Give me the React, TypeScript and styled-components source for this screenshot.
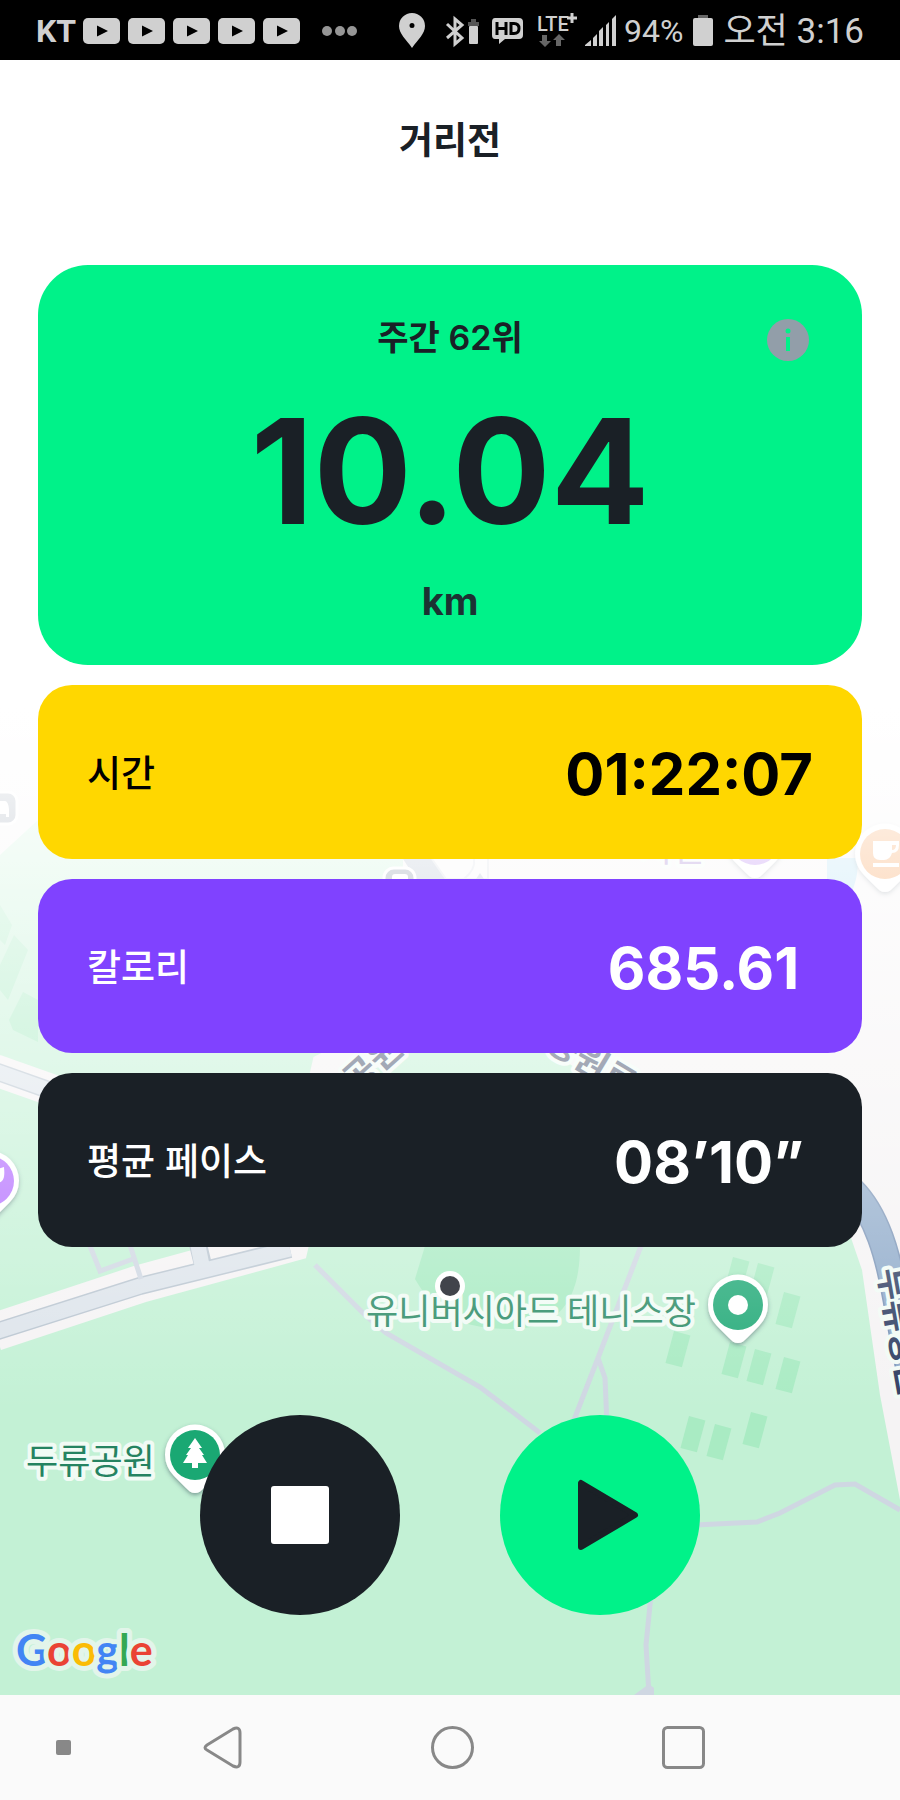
import React from "react";
import styled, { createGlobalStyle } from "styled-components";

const ink = "#1a2026";
const lime = "#00f289";

const GlobalStyle = createGlobalStyle`
  *, *::before, *::after { box-sizing: border-box; }
  body {
    margin: 0;
    background: #fff;
    color: ${ink};
    font-family: Inter, "Noto Sans CJK KR", sans-serif;
  }
`;

const Screen = styled.div`
  min-height: 100vh;
  display: flex;
  flex-direction: column;
`;

const StatusBar = styled.header`
  height: 60px;
  padding: 2px 36px 0;
  display: flex;
  align-items: center;
  justify-content: space-between;
  background: #000;
  color: #d0d0d0;
  font-family: Roboto, "Noto Sans CJK KR", sans-serif;
  font-size: 32px;
  line-height: 60px;
  white-space: nowrap;
`;

const StatusGroup = styled.div<{ $gap: number }>`
  display: flex;
  align-items: center;
  gap: ${(p) => p.$gap}px;
`;

const Carrier = styled.span`
  font-weight: 700;
`;

const Clock = styled.time`
  padding-top: 2px;
  font-size: 35px;
`;

const Glyph = styled.svg`
  display: block;
  flex: none;
  overflow: visible;
`;

const RunPanel = styled.main`
  flex: 1;
  position: relative;
  isolation: isolate;
  display: flex;
  flex-direction: column;
  padding: 0 38px 80px;
`;

const MapCanvas = styled.svg`
  position: absolute;
  inset: 0;
  z-index: -1;
  width: 100%;
  height: 100%;
  font-family: "Noto Sans CJK KR", sans-serif;
`;

const Title = styled.h1`
  margin: 0;
  padding: 51px 0 94px;
  font-size: 37px;
  line-height: 60px;
  font-weight: 700;
  text-align: center;
`;

const Cards = styled.div`
  display: flex;
  flex-direction: column;
  gap: 20px;
`;

const DistanceCard = styled.section`
  position: relative;
  height: 400px;
  padding: 49px 52px 0;
  border-radius: 50px;
  background: ${lime};
  text-align: center;
`;

const Rank = styled.p`
  margin: 0;
  font-size: 34px;
  line-height: 48px;
  font-weight: 600;
`;

const Distance = styled.p`
  margin: 19px 0 20px;
  font-size: 146px;
  line-height: 180px;
  font-weight: 700;
`;

const Unit = styled.p`
  margin: 0;
  font-size: 38px;
  line-height: 40px;
  font-weight: 700;
  color: #1c3233;
`;

const InfoButton = styled.button`
  position: absolute;
  top: 54px;
  right: 53px;
  padding: 0;
  border: 0;
  background: none;
`;

const StatCard = styled.section<{ $bg: string; $fg: string }>`
  height: 174px;
  padding: 4px 49px 0;
  border-radius: 34px;
  display: flex;
  align-items: center;
  justify-content: space-between;
  background: ${(p) => p.$bg};
  color: ${(p) => p.$fg};
`;

const StatLabel = styled.span`
  font-size: 37px;
  line-height: 56px;
  font-weight: 500;
`;

const StatValue = styled.strong`
  font-size: 58px;
  line-height: 72px;
  font-weight: 700;
  white-space: pre;
`;

const Controls = styled.div`
  display: flex;
  justify-content: center;
  gap: 100px;
  margin-top: 168px;
`;

const RoundButton = styled.button<{ $bg: string }>`
  width: 200px;
  height: 200px;
  padding: 0;
  border: 0;
  border-radius: 50%;
  display: grid;
  place-items: center;
  background: ${(p) => p.$bg};
`;

const NavBar = styled.nav`
  height: 105px;
  padding: 0 195px 0 56px;
  display: flex;
  align-items: center;
  gap: 132px;
  background: #fafafa;
`;

const NavKeys = styled.div`
  flex: 1;
  display: flex;
  align-items: center;
  justify-content: space-between;
`;

const NavButton = styled.button`
  padding: 0;
  border: 0;
  background: none;
`;

const YoutubeIcon = () => (
  <Glyph width="39" height="28" viewBox="0 0 39 28">
    <rect x="1" y="1" width="37" height="26" rx="5" fill="#d0d0d0" />
    <path d="M15 8.500v11l11-5.500z" fill="#000" />
  </Glyph>
);

const courts = [
  [730, 1260], [755, 1266], [781, 1295], [671, 1334], [727, 1345],
  [752, 1352], [781, 1360], [686, 1419], [712, 1427], [748, 1415],
];

const Pin = ({ x, y, fill, children }: { x: number; y: number; fill: string; children?: React.ReactNode }) => (
  <g transform={`translate(${x} ${y})`}>
    <path d="M0 38c-4 0-6-2-9-5l-12-12a30 30 0 1 1 42 0L9 33c-3 3-5 5-9 5z" fill="#fff" filter="url(#pinShadow)" />
    <circle r="25" fill={fill} />
    {children}
  </g>
);

const label = {
  stroke: "#f1fbf5",
  strokeWidth: 8,
  strokeLinejoin: "round" as const,
  paintOrder: "stroke",
};

const CourseMap = () => (
  <MapCanvas viewBox="0 60 900 1635" preserveAspectRatio="xMidYMid slice" role="img" aria-label="지도">
    <defs>
      <linearGradient id="fade" gradientUnits="userSpaceOnUse" x1="0" y1="60" x2="0" y2="1410">
        <stop offset="0" stopColor="#fff" />
        <stop offset="0.48" stopColor="#fff" />
        <stop offset="1" stopColor="#fff" stopOpacity="0" />
      </linearGradient>
      <filter id="pinShadow" x="-30%" y="-30%" width="160%" height="170%">
        <feDropShadow dx="0" dy="2" stdDeviation="2" floodColor="#345" floodOpacity="0.5" />
      </filter>
    </defs>
    <rect y="60" width="900" height="1635" fill="#f5f3f4" />
    <path d="M0 855 38 820V795H400L430 890 545 1035 640 1073 850 1235 862 1270 880 1395 900 1500V1695H0z" fill="#c3f1d5" />
    <path d="M0 905 12 925 5 945 0 940zM0 965l14-30 14 15-20 50-8-10zM9 1020l14-28 15 8v42l-25-12z" fill="#a9ebc3" />
    <path d="M425 1246h155c0 50-18 83-70 83-50 0-75-15-95-50z" fill="#a9ebc3" />
    <g fill="#a9ebc3">
      {courts.map(([x, y]) => (
        <rect key={`${x}-${y}`} width="17" height="33" transform={`translate(${x + 3} ${y - 3}) rotate(15)`} />
      ))}
    </g>
    <path d="M827 858h30c2 12-1 24-6 36l-24-14z" fill="#a8dcf2" />
    <path d="M403 859h84v20h-84z" fill="#f8f7f8" />
    <path d="M403 859h29l14 20h-30z" fill="#a9b6c8" />
    <path d="M432 859l14 20h42v-20M474 859q2 10-10 20" fill="none" stroke="#d5dae2" strokeWidth="2" />
    <path d="M480 873l4 6h-8z" fill="#a9b6c8" />
    <g fill="none" stroke="#f5f3f4">
      <path d="M-5 1070 60 1093" strokeWidth="32" />
      <path d="M-5 1332 140 1284 290 1243 330 1070 410 1030" strokeWidth="38" />
      <path d="M545 1020 640 1083" strokeWidth="46" />
    </g>
    <g fill="none" stroke="#b9c5d0" strokeWidth="18">
      <path d="M-5 1071 60 1094" />
      <path d="M-5 1332 140 1286 290 1249M203 1265 196 1236" />
    </g>
    <g fill="none" stroke="#dde4eb" strokeWidth="15">
      <path d="M-5 1071 60 1094" />
      <path d="M-5 1332 140 1286 290 1249M203 1270 196 1236" />
    </g>
    <g fill="none" stroke="#cfd7e2" strokeWidth="5">
      <path d="M90 1246 100 1271 133 1259M129 1242 141 1279" />
      <path d="M315 1265 366 1316 386 1333 480 1387 540 1433" />
      <path d="M641 1246 598 1358 572 1425M598 1358 605 1378 607 1425" />
      <path d="M695 1525 757 1522 780 1513 835 1485 855 1484 900 1510" />
      <path d="M651 1595 646 1645 649 1695" />
    </g>
    <path d="M634 1695 649 1684l5 4v7z" fill="#cfd7e2" />
    <path d="M852 1190c25 25 36 65 44 110s12 70 24 120" fill="none" stroke="#7892b5" strokeWidth="27" />
    <path d="M852 1190c25 25 36 65 44 110s12 70 24 120" fill="none" stroke="#8da9c9" strokeWidth="24" />
    <g fontSize="35" fontWeight="700" {...label}>
      <text transform="translate(357 1094) rotate(-42)" fill="#4a5670">공원</text>
      <text transform="translate(544 1048) rotate(31)" fill="#4a5670">공원로</text>
      <text transform="translate(878 1270) rotate(80)" fill="#2f3f63">두류공원</text>
      <text x="640" y="862" fontWeight="400" fill="#8b5fc4">시민</text>
    </g>
    <g>
      <rect x="-19" y="792" width="36" height="32" rx="9" fill="#6e7f93" stroke="#fff" strokeWidth="3" />
      <path d="M-8 801H5q3 0 4 8v8H6v-3H-8z" fill="#fff" />
      <rect x="384" y="868" width="31" height="34" rx="10" fill="#6e7f93" stroke="#fff" strokeWidth="3" />
      <rect x="392" y="874" width="16" height="14" rx="3" fill="#fff" />
      <Pin x={755} y={840} fill="#a766ee" />
      <Pin x={885} y={854} fill="#f58a32">
        <path d="M-12-13H14v4q0 8-7 8-2 7-8 7H-5q-7 0-7-7zM7-9v5q4 0 4-5zM-12 9H14v4H-12z" fill="#fff" fillRule="evenodd" />
      </Pin>
      <Pin x={-11} y={1181} fill="#b26bff">
        <path d="M8-12 15-14c1 10 0 16-8 16z" fill="#fff" />
      </Pin>
    </g>
    <text x="366" y="1324" fontSize="35" fill="#2f8d68" {...label}>유니버시아드 테니스장</text>
    <Pin x={738} y={1305} fill="#23aa78">
      <circle r="10" fill="#fff" />
    </Pin>
    <rect y="60" width="900" height="1635" fill="url(#fade)" />
    <circle cx="450" cy="1286" r="15" fill="#fff" />
    <circle cx="450" cy="1286" r="10" fill="#41444b" />
    <text x="26" y="1474" fontSize="35" fill="#258361" {...label}>두류공원</text>
    <Pin x={195} y={1455} fill="#1aa873">
      <path d="M0-17 7-7H4L9 0H7L12 8H3v5h-6V8h-9L-7 0h-2L-4-7h-3z" fill="#fff" />
    </Pin>
    <text x="16" y="1666" fontFamily="Lato, sans-serif" fontSize="43" fontWeight="700" {...label} stroke="#e2f5ea" strokeWidth="10">
      <tspan fill="#4285f4">G</tspan>
      <tspan fill="#ea4335">o</tspan>
      <tspan fill="#fbbc05">o</tspan>
      <tspan fill="#4285f4">g</tspan>
      <tspan fill="#34a853">l</tspan>
      <tspan fill="#ea4335">e</tspan>
    </text>
  </MapCanvas>
);

const stats = [
  { name: "시간", value: "01:22:07", bg: "#ffd700", fg: "#000" },
  { name: "칼로리", value: "685.61 ", bg: "#8042ff", fg: "#fff" },
  { name: "평균 페이스", value: "08’10”\u2009", bg: ink, fg: "#fff" },
];

export default function App() {
  return (
    <Screen>
      <GlobalStyle />
      <StatusBar>
        <StatusGroup $gap={6}>
          <Carrier>KT</Carrier>
          {[0, 1, 2, 3, 4].map((n) => (
            <YoutubeIcon key={n} />
          ))}
          <Glyph width="52" height="28" viewBox="0 0 52 28" fill="#969696">
            <circle cx="20" cy="14" r="5" />
            <circle cx="33" cy="14" r="5" />
            <circle cx="45" cy="14" r="5" />
          </Glyph>
        </StatusGroup>
        <StatusGroup $gap={8}>
          <Glyph width="217" height="40" viewBox="0 0 217 40" fill="#d0d0d0">
            <path d="M13 2A13 13 0 0 0 0 15c0 8 7 13 13 22 6-9 13-14 13-22A13 13 0 0 0 13 2zm0 10a2.500 2.500 0 1 1 0 5 2.500 2.500 0 0 1 0-5z" fillRule="evenodd" />
            <path d="M48 13 63 27 56 33V8l7 6-15 13" fill="none" stroke="#d0d0d0" strokeWidth="3" />
            <path d="M69 15V11h3V8h5v3h3v4z" fill="#555" />
            <rect x="70" y="15" width="9" height="18" rx="1" />
            <path d="M96 7h24q4 0 4 4v13q0 4-4 4h-14l-6 5v-5h-4q-3 0-3-4V11q0-4 3-4z" />
            <path d="M98 11v13M107 11v13M98 17.500h9M112 12.500v10h3q5 0 5-5t-5-5z" fill="none" stroke="#000" strokeWidth="3" />
            <text x="138" y="20" fontSize="20" fontWeight="500">LTE</text>
            <path d="M168 7h10M173 2v10" stroke="#d0d0d0" strokeWidth="3" />
            <path d="M143 24h5v6h4l-6 6-6-6h3zM157 35h5v-6h4l-6-6-6 6h3z" fill="#666" />
            <path d="M186 35v-1l6-5v6zM194 35V27l4-4v12zM200 35V20l4-4v19zM207 35V14l3-3v24zM213 35V8l4-4v31z" />
          </Glyph>
          <span>94%</span>
          <Glyph width="24" height="32" viewBox="0 0 24 32">
            <path d="M7 0h10v3H7z" fill="#666" />
            <rect x="2" y="3" width="20" height="28" rx="2" fill="#d0d0d0" />
          </Glyph>
          <Clock>오전 3:16</Clock>
        </StatusGroup>
      </StatusBar>
      <RunPanel>
        <CourseMap />
        <Title>거리전</Title>
        <Cards>
          <DistanceCard>
            <Rank>주간 62위</Rank>
            <Distance>10.04</Distance>
            <Unit>km</Unit>
            <InfoButton aria-label="정보">
              <Glyph width="42" height="42" viewBox="0 0 42 42">
                <circle cx="21" cy="21" r="21" fill="#929ea9" />
                <circle cx="21" cy="12" r="2.500" fill={lime} />
                <path d="M19 18h4v14h-4z" fill={lime} />
              </Glyph>
            </InfoButton>
          </DistanceCard>
          {stats.map((s) => (
            <StatCard key={s.name} $bg={s.bg} $fg={s.fg}>
              <StatLabel>{s.name}</StatLabel>
              <StatValue>{s.value}</StatValue>
            </StatCard>
          ))}
        </Cards>
        <Controls>
          <RoundButton $bg={ink} aria-label="정지">
            <Glyph width="60" height="60" viewBox="0 0 60 60">
              <rect x="1" y="1" width="58" height="58" rx="3" fill="#fff" />
            </Glyph>
          </RoundButton>
          <RoundButton $bg={lime} aria-label="재생">
            <Glyph width="72" height="72" viewBox="0 0 72 72">
              <path d="M17 4v64l54-32z" fill={ink} stroke={ink} strokeWidth="6" strokeLinejoin="round" />
            </Glyph>
          </RoundButton>
        </Controls>
      </RunPanel>
      <NavBar>
        <NavButton aria-label="메뉴">
          <Glyph width="15" height="15" viewBox="0 0 15 15">
            <rect width="15" height="15" rx="2" fill="#888" />
          </Glyph>
        </NavButton>
        <NavKeys>
          <NavButton aria-label="뒤로">
            <Glyph width="39" height="43" viewBox="0 0 39 43" fill="none" stroke="#888" strokeWidth="3">
              <path d="M4 19 30 3q7-3 7 4v29q0 7-7 4L4 24q-4-2 0-5z" />
            </Glyph>
          </NavButton>
          <NavButton aria-label="홈">
            <Glyph width="43" height="43" viewBox="0 0 43 43" fill="none" stroke="#888" strokeWidth="3">
              <circle cx="21.500" cy="21.500" r="20" />
            </Glyph>
          </NavButton>
          <NavButton aria-label="최근 앱">
            <Glyph width="43" height="43" viewBox="0 0 43 43" fill="none" stroke="#888" strokeWidth="3">
              <rect x="1.500" y="1.500" width="40" height="40" rx="4" />
            </Glyph>
          </NavButton>
        </NavKeys>
      </NavBar>
    </Screen>
  );
}
